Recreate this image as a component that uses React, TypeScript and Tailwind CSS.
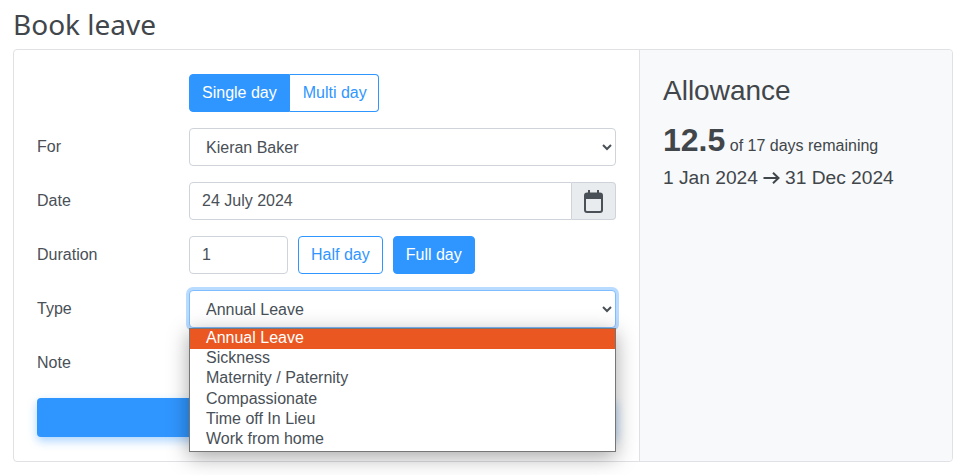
import React from "react";

const leaveTypes = [
  "Annual Leave",
  "Sickness",
  "Maternity / Paternity",
  "Compassionate",
  "Time off In Lieu",
  "Work from home",
];

const Row: React.FC<{ label: string; children: React.ReactNode }> = ({ label, children }) => (
  <div className="flex items-center mb-4 h-[38px]">
    <div className="w-[152px] text-[#495057]">{label}</div>
    <div className="flex-1 flex min-w-0">{children}</div>
  </div>
);

const CalendarIcon = () => (
  <svg width="19" height="23" viewBox="0 0 19 23" className="text-[#495057]">
    <path d="M5 0.5v4M14 0.5v4" stroke="currentColor" strokeWidth="2" strokeLinecap="round" />
    <rect x="1" y="3.5" width="17" height="18.5" rx="2" fill="none" stroke="currentColor" strokeWidth="2" />
    <rect x="1" y="3.5" width="17" height="5.5" fill="currentColor" />
  </svg>
);

const ArrowIcon = () => (
  <svg width="17" height="14" viewBox="0 0 17 14" className="inline-block mx-[5px] align-[-1px] text-[#41464b]">
    <path d="M0.5 7h15M10 1.8l5.5 5.2-5.5 5.2" fill="none" stroke="currentColor" strokeWidth="2" />
  </svg>
);

const App: React.FC = () => {
  return (
    <div className="w-[966px] h-[475px] bg-white overflow-hidden px-[13px] text-base text-[#495057] font-['Liberation_Sans',Arial,sans-serif]">
      <h1 className="h-[49px] pt-[5px] text-[28px] leading-[38px] text-[#41464b] font-['Noto_Sans',sans-serif]">
        Book leave
      </h1>

      <div className="flex w-[940px] h-[413px] border border-[#dfe1e4] rounded">
        <div className="w-[625px] px-[23px] pt-6 relative">
          <Row label="">
            <div className="flex h-[38px]">
              <button className="px-3 bg-[#3096ff] text-white border border-[#3096ff] rounded-l">
                Single day
              </button>
              <button className="pl-[13px] pr-[11px] bg-white text-[#3096ff] border border-[#3096ff] border-l-0 rounded-r">
                Multi day
              </button>
            </div>
          </Row>

          <Row label="For">
            <select className="w-full h-[38px] px-3 bg-white border border-[#ced4da] rounded text-[#495057]">
              <option>Kieran Baker</option>
            </select>
          </Row>

          <Row label="Date">
            <input
              readOnly
              value="24 July 2024"
              className="flex-1 min-w-0 h-[38px] px-3 bg-white border border-[#ced4da] rounded-l text-[#495057]"
            />
            <div className="w-[44px] h-[38px] flex items-center justify-center bg-[#e9ecef] border border-l-0 border-[#ced4da] rounded-r">
              <CalendarIcon />
            </div>
          </Row>

          <Row label="Duration">
            <input
              readOnly
              value="1"
              className="w-[99px] h-[38px] px-3 bg-white border border-[#ced4da] rounded text-[#495057]"
            />
            <button className="ml-[10px] px-3 h-[38px] bg-white text-[#3096ff] border border-[#3096ff] rounded">
              Half day
            </button>
            <button className="ml-[10px] px-3 h-[38px] bg-[#3096ff] text-white border border-[#3096ff] rounded">
              Full day
            </button>
          </Row>

          <Row label="Type">
            <select className="w-full h-[38px] px-3 bg-white border border-[#80bdff] rounded text-[#495057] shadow-[0_0_0_3px_#b8dbff]">
              <option>Annual Leave</option>
            </select>
          </Row>

          <Row label="Note">
            <input className="w-full h-[38px] px-3 bg-white border border-[#ced4da] rounded" />
          </Row>

          <div className="w-full h-[39px] bg-[#3096ff] rounded shadow-[0_4px_10px_rgba(48,150,255,0.4)]" />

          {/* open select popup */}
          <ul className="absolute left-[175px] top-[278px] w-[427px] pb-px bg-white border border-[#767676] shadow-[0_5px_20px_rgba(0,0,0,0.35)] text-[#495057]">
            {leaveTypes.map((t, i) => (
              <li
                key={t}
                className={
                  i === 0
                    ? "h-[20.2px] leading-[18px] px-4 bg-[#eb5720] text-white"
                    : "h-[20.2px] leading-[18px] px-4"
                }
              >
                {t}
              </li>
            ))}
          </ul>
        </div>

        <div className="flex-1 bg-[#f8f9fa] border-l border-[#dfe1e4] px-[23px] pt-6 rounded-r text-[#41464b]">
          <h2 className="text-[28px] leading-[34px]">Allowance</h2>
          <p className="mt-[13px] leading-[38px]">
            <span className="text-[32px] font-bold">12.5</span> of 17 days remaining
          </p>
          <p className="mt-px text-[19.2px] leading-[24px]">
            1 Jan 2024<ArrowIcon />31 Dec 2024
          </p>
        </div>
      </div>
    </div>
  );
};

export default App;
